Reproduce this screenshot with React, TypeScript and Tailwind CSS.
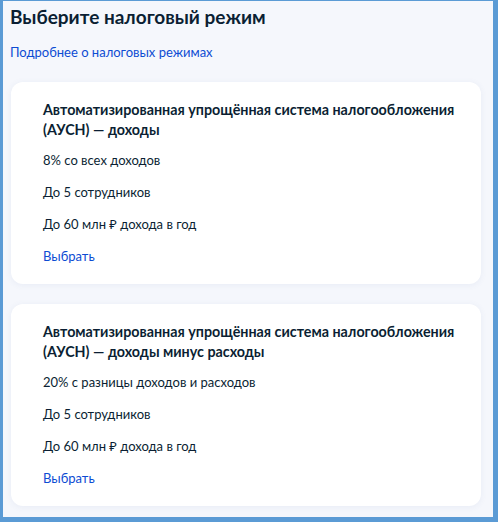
const regimes = [
  {
    title: "Автоматизированная упрощённая система налогообложения (АУСН) — доходы",
    items: ["8% со всех доходов", "До 5 сотрудников", "До 60 млн ₽ дохода в год"],
  },
  {
    title:
      "Автоматизированная упрощённая система налогообложения (АУСН) — доходы минус расходы",
    items: ["20% с разницы доходов и расходов", "До 5 сотрудников", "До 60 млн ₽ дохода в год"],
  },
];

function RegimeCard({ title, items }: { title: string; items: string[] }) {
  return (
    <div className="rounded-[12px] bg-white shadow-[0_1px_6px_rgba(80,100,160,0.08)] pl-8 pr-6 pt-[18px] pb-[12px]">
      <h2 className="text-[14.3px] leading-[20px] font-bold text-[#0b1f33]">{title}</h2>
      <ul className="mt-[4px] flex flex-col">
        {items.map((item) => (
          <li key={item} className="text-[13px] leading-[32px] text-[#0b1f33]">
            {item}
          </li>
        ))}
      </ul>
      <a href="#" className="block text-[13px] leading-[32px] text-[#0d4cd3]">
        Выбрать
      </a>
    </div>
  );
}

export default function App() {
  return (
    <div
      className="w-[498px] h-[522px] overflow-hidden bg-[#5b9bd5] pl-[3px] pt-px pr-[5px] pb-[5px]"
      style={{ fontFamily: "Lato, 'Noto Sans', sans-serif" }}
    >
      <div className="h-full bg-[#f5f7fc] pl-2 pr-[12px] pt-[3px]">
        <h1 className="-ml-px text-[19px] leading-[26px] font-bold text-[#0b1f33]">
          Выберите налоговый режим
        </h1>
        <a href="#" className="-ml-px mt-[13px] block text-[13px] leading-[18px] text-[#0d4cd3]">
          Подробнее о налоговых режимах
        </a>
        <div className="mt-[21px] flex flex-col gap-[20px]">
          {regimes.map((r) => (
            <RegimeCard key={r.title} title={r.title} items={r.items} />
          ))}
        </div>
      </div>
    </div>
  );
}
